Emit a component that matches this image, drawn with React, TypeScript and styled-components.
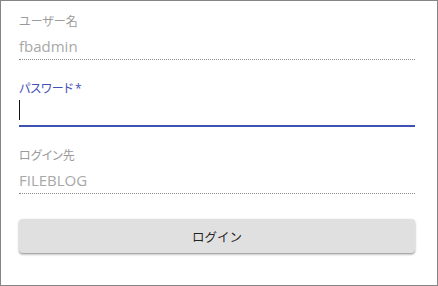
import styled, { createGlobalStyle } from "styled-components";

const GlobalStyle = createGlobalStyle`
  html, body {
    margin: 0;
    padding: 0;
    background: #ffffff;
  }
  body {
    font-family: "Open Sans", "Noto Sans CJK JP", sans-serif;
  }
`;

type FieldProps = {
  label: string;
  value?: string;
  required?: boolean;
  focused?: boolean;
};

function Field({ label, value, required, focused }: FieldProps) {
  return (
    <FieldBox>
      <Label $focused={focused}>
        {label}
        {required && <Star>*</Star>}
      </Label>
      <InputRow $focused={focused}>
        {focused ? <Caret /> : <Value>{value}</Value>}
      </InputRow>
    </FieldBox>
  );
}

function App() {
  return (
    <>
      <GlobalStyle />
      <Frame>
        <Form>
          <Field label="ユーザー名" value="fbadmin" />
          <Field label="パスワード" required focused />
          <Field label="ログイン先" value="FILEBLOG" />
          <Button>ログイン</Button>
        </Form>
      </Frame>
    </>
  );
}
export default App;

const Frame = styled.div`
  box-sizing: border-box;
  width: 438px;
  height: 286px;
  border: 1px solid #858585;
  background: #ffffff;
`;

const Form = styled.div`
  display: flex;
  flex-direction: column;
  gap: 22px;
  padding: 14px 22px 0 18px;
`;

const FieldBox = styled.div`
  display: flex;
  flex-direction: column;
`;

const Label = styled.div<{ $focused?: boolean }>`
  height: 14px;
  line-height: 14px;
  font-size: 12px;
  font-feature-settings: "palt";
  color: ${(p) => (p.$focused ? "#3f51b5" : "#9a9a9a")};
`;

const Star = styled.span`
  margin-left: 2px;
`;

const InputRow = styled.div<{ $focused?: boolean }>`
  display: flex;
  align-items: center;
  height: 20px;
  margin-top: ${(p) => (p.$focused ? "4px" : "7px")};
  padding-bottom: ${(p) => (p.$focused ? "5px" : "3px")};
  border-bottom: ${(p) =>
    p.$focused ? "2px solid #3f51b5" : "1px dotted #8a8a8a"};
`;

const Value = styled.span`
  font-size: 15px;
  line-height: 20px;
  color: #a8a8a8;
`;

const Caret = styled.span`
  width: 1px;
  height: 20px;
  background: #111111;
`;

const Button = styled.div`
  display: flex;
  justify-content: center;
  align-items: center;
  height: 34px;
  margin-top: 3px;
  border-radius: 4px;
  background: #e0e0e0;
  color: rgba(0, 0, 0, 0.87);
  font-size: 12.5px;
  box-shadow: 0 1px 3px rgba(0, 0, 0, 0.2), 0 2px 2px rgba(0, 0, 0, 0.12),
    0 1px 1px rgba(0, 0, 0, 0.14);
  user-select: none;
`;
